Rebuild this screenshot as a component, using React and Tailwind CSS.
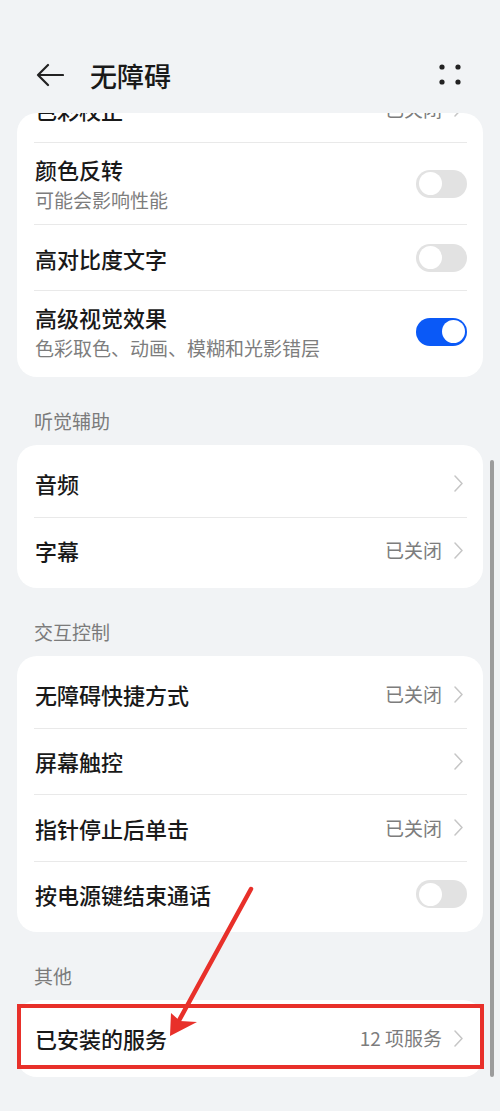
import { ChevronRight } from 'lucide-react'

const font = "font-['Noto_Sans_CJK_SC','Noto_Sans',sans-serif]"

function Toggle({ on }) {
  return (
    <div
      className={`w-[51px] h-[28px] rounded-full flex items-center px-[2.5px] shrink-0 ${
        on ? 'bg-[#0a59f7] justify-end' : 'bg-[#e2e2e2] justify-start'
      }`}
    >
      <div className="w-[23px] h-[23px] rounded-full bg-white" />
    </div>
  )
}

function Chevron() {
  return (
    <svg width="9" height="17" viewBox="0 0 9 17" className="mr-[4px] shrink-0">
      <polyline points="1,1 8,8.5 1,16" fill="none" stroke="#c6c6c6" strokeWidth="1.5" strokeLinecap="round" strokeLinejoin="round" />
    </svg>
  )
}

function Row({ title, sub, value, toggle, chevron, first, h = 'h-[66.5px]' }) {
  return (
    <div className={`${h} relative flex justify-between ${sub ? 'items-start pt-[12px]' : 'items-center'} ${first ? '' : 'border-t border-[#e9e9e9]'}`}>
      <div className="flex flex-col pl-[1px]">
        <span className="text-[22px] leading-[28px] font-medium text-[#191919]">{title}</span>
        {sub && <span className="text-[19px] leading-[22px] mt-[6px] text-[#7d7d7d]">{sub}</span>}
      </div>
      <div className={`flex items-center gap-[12px] ${sub ? 'self-center -mt-[12px]' : ''}`}>
        {value && <span className="text-[19px] text-[#7d7d7d]">{value}</span>}
        {chevron && <Chevron />}
        {toggle !== undefined && <Toggle on={toggle} />}
      </div>
    </div>
  )
}

function Section({ label }) {
  return (
    <div className="h-[68px] pt-[31px] pl-[34px]">
      <span className="text-[19px] leading-[26px] text-[#7b7b7b]">{label}</span>
    </div>
  )
}

export default function App() {
  return (
    <div className={`w-[500px] h-[1111px] bg-[#f1f3f5] relative overflow-hidden ${font}`}>
      {/* Header */}
      <header className="h-[113px] pt-[57px] pl-[36px] pr-[39px]">
        <div className="h-[36px] flex items-center">
          <svg width="28" height="24" viewBox="0 0 28 24" className="shrink-0">
            <path d="M27 12H2M12 2L2 12l10 10" fill="none" stroke="#222" strokeWidth="2.2" strokeLinecap="round" strokeLinejoin="round" />
          </svg>
          <h1 className="ml-[26px] text-[27px] font-medium text-[#191919] leading-none">无障碍</h1>
          <svg width="22" height="22" viewBox="0 0 22 22" className="ml-auto">
            <circle cx="3" cy="3" r="2.6" fill="#222" />
            <circle cx="19" cy="3" r="2.6" fill="#222" />
            <circle cx="3" cy="18" r="2.6" fill="#222" />
            <circle cx="19" cy="18" r="2.6" fill="#222" />
          </svg>
        </div>
      </header>

      {/* Visual card, scrolled under header */}
      <div className="mx-[17px] bg-white rounded-[20px] pl-[17px] pr-[16px] pb-[5px]">
        <div className="h-[29px] overflow-hidden flex flex-col justify-end">
          <div className="shrink-0">
            <Row title="色彩校正" value="已关闭" chevron first />
          </div>
        </div>
        <Row title="颜色反转" sub="可能会影响性能" toggle={false} h="h-[82px]" />
        <Row title="高对比度文字" toggle={false} h="h-[66px]" />
        <Row title="高级视觉效果" sub="色彩取色、动画、模糊和光影错层" toggle={true} h="h-[82px]" />
      </div>

      <Section label="听觉辅助" />
      <div className="mx-[17px] bg-white rounded-[20px] pl-[17px] pr-[16px] py-[5px]">
        <Row title="音频" chevron first />
        <Row title="字幕" value="已关闭" chevron />
      </div>

      <Section label="交互控制" />
      <div className="mx-[17px] bg-white rounded-[20px] pl-[17px] pr-[16px] py-[5px]">
        <Row title="无障碍快捷方式" value="已关闭" chevron first />
        <Row title="屏幕触控" chevron />
        <Row title="指针停止后单击" value="已关闭" chevron />
        <Row title="按电源键结束通话" toggle={false} />
      </div>

      <Section label="其他" />
      <div className="relative mx-[17px] bg-white rounded-[20px] pl-[17px] pr-[16px] py-[5px]">
        <Row title="已安装的服务" value="12 项服务" chevron first />
        {/* red highlight box */}
        <div className="absolute left-0 -right-[1px] top-[4px] bottom-[8px] border-[4px] border-[#e8302a]" />
      </div>

      {/* scrollbar */}
      <div className="absolute left-[490px] top-[460px] w-[4px] h-[617px] rounded-full bg-[#9c9c9c]" />

      {/* annotation arrow */}
      <svg className="absolute inset-0 pointer-events-none" width="500" height="1111" viewBox="0 0 500 1111">
        <line x1="251" y1="889" x2="176" y2="1026" stroke="#e8302a" strokeWidth="4.5" strokeLinecap="round" />
        <polygon points="170,1036 171,1013 180,1021 197,1022" fill="#e8302a" />
      </svg>
    </div>
  )
}
